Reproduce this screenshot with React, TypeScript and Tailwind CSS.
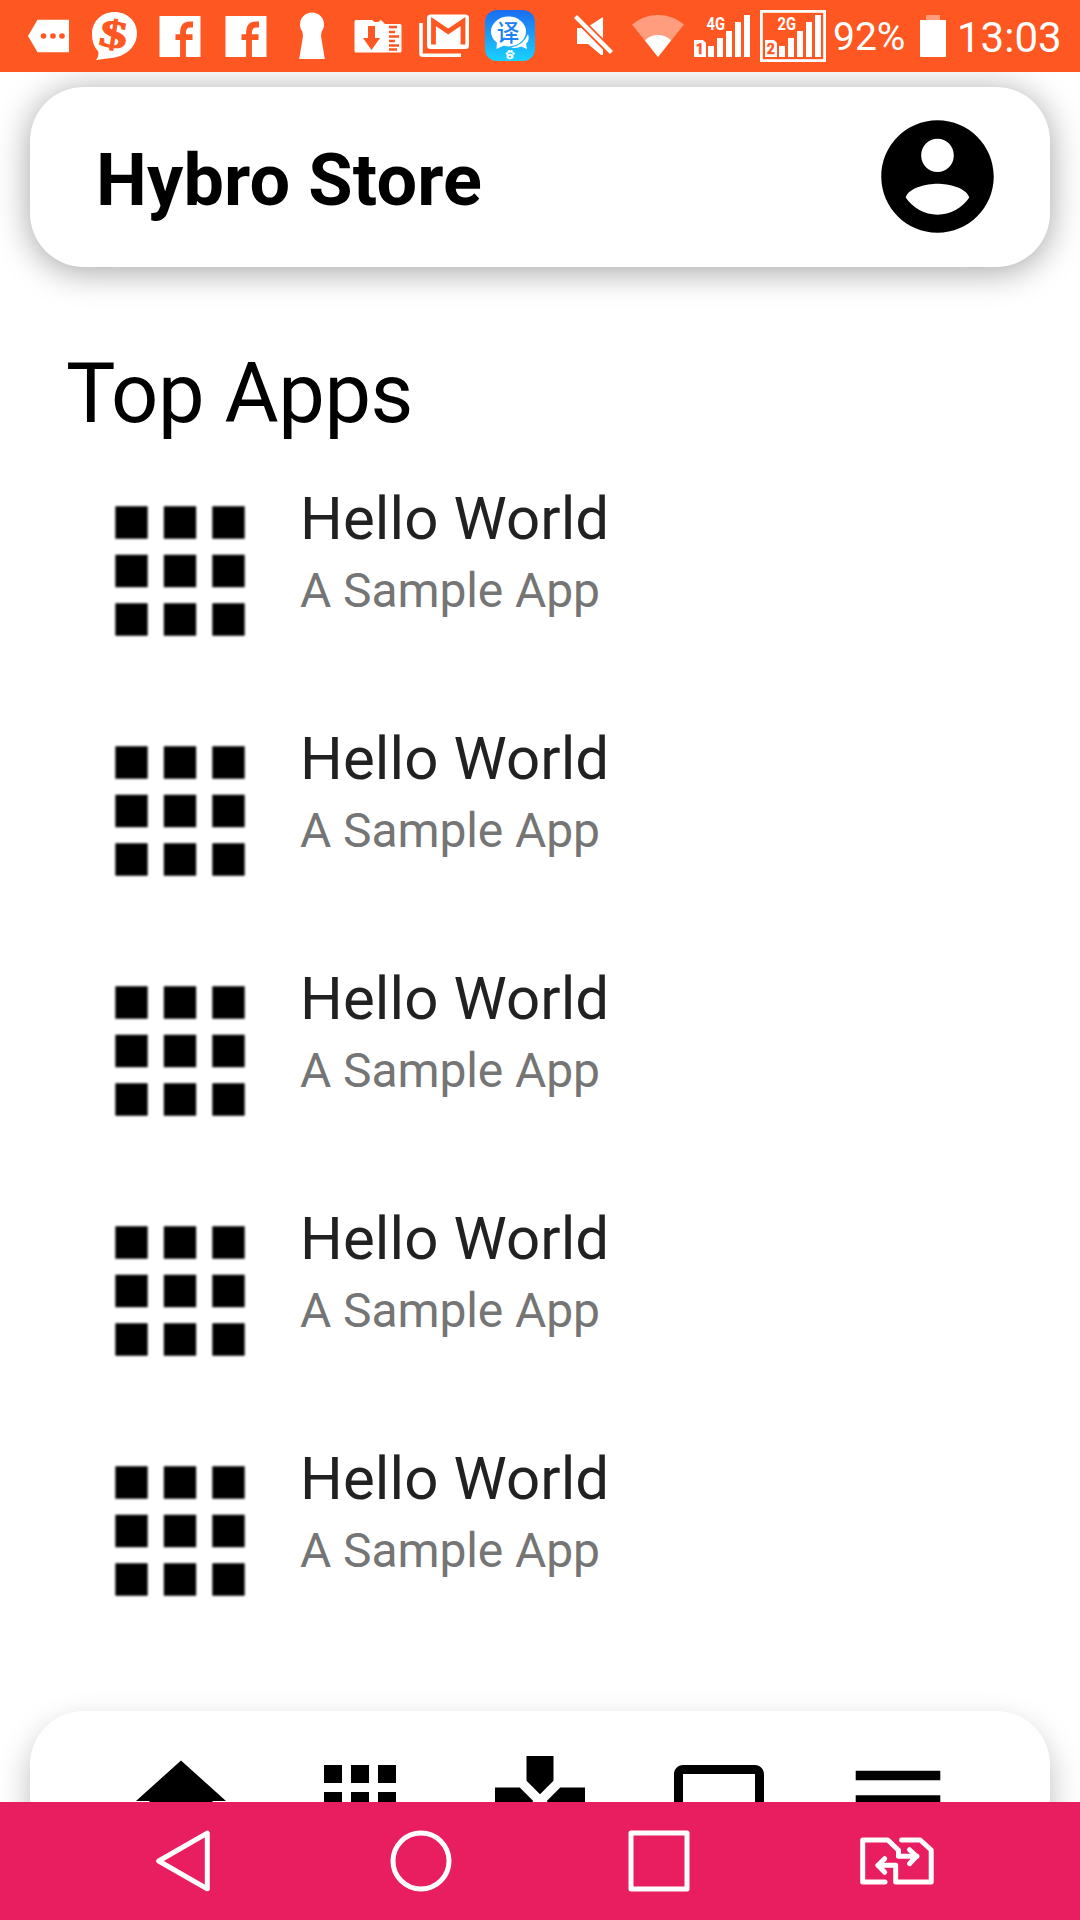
/**
 * Hybro Store home screen
 * Status bar, header card, top apps list and bottom tabs
 */

import type { ReactNode } from 'react';

interface AppEntry {
  id: number;
  name: string;
  description: string;
}

const topApps: AppEntry[] = [
  { id: 1, name: 'Hello World', description: 'A Sample App' },
  { id: 2, name: 'Hello World', description: 'A Sample App' },
  { id: 3, name: 'Hello World', description: 'A Sample App' },
  { id: 4, name: 'Hello World', description: 'A Sample App' },
  { id: 5, name: 'Hello World', description: 'A Sample App' },
];

// Each status icon is drawn in bar coordinates, x is where its slot starts
function StatusIcon({ x, width, children }: { x: number; width: number; children: ReactNode }) {
  return (
    <svg
      width={width}
      height={72}
      viewBox={`${x} 0 ${width} 72`}
      fill="#fff"
      className="shrink-0"
    >
      {children}
    </svg>
  );
}

function FacebookIcon() {
  return (
    <StatusIcon x={156} width={66}>
      <rect x="159.5" y="16" width="41" height="41" />
      <path d="M183 57V33Q183 24.500 190 24.500H193M175.500 37.200H192.500" fill="none" stroke="#ff5722" strokeWidth="5.800" />
    </StatusIcon>
  );
}

function SignalBars({ sim, network }: { sim: string; network: string }) {
  return (
    <>
      <path d="M694 40H703L706 43V57H694Z" />
      <text x="695.800" y="54" fontSize="14" fontWeight="700" fill="#ff5722" stroke="#ff5722" strokeWidth="0.5">
        {sim}
      </text>
      <path d="M708 46h6v11h-6zM717 38h6v19h-6zM726 31h6v26h-6zM735 22h6v35h-6zM744 15h6v42h-6z" />
      <text x="706.500" y="30" fontSize="17.500" fontWeight="700" textLength="18.500" lengthAdjust="spacingAndGlyphs">
        {network}
      </text>
    </>
  );
}

function StatusBar() {
  return (
    <div className="flex h-[72px] shrink-0 items-center bg-[#ff5722] pl-6 text-white">
      <StatusIcon x={24} width={60}>
        <path d="M28 36L37.500 19.700H69V52.300H37.500Z" />
        <g fill="#ff5722">
          <circle cx="43.500" cy="36" r="2.800" />
          <circle cx="53" cy="36" r="2.800" />
          <circle cx="62" cy="36" r="2.800" />
        </g>
      </StatusIcon>
      <StatusIcon x={84} width={72}>
        <path d="M114.500 12C127 12 137 21 137 33C137 47 125 57 111 58L96 60C98.500 57 99 54 98 51C94 47 92 41 92 34C92 21 102 12 114.500 12Z" />
        <text
          x="113.500"
          y="47.500"
          fontSize="39"
          fontWeight="700"
          fill="#ff5722"
          stroke="#ff5722"
          strokeWidth="1"
          textAnchor="middle"
          textLength="28"
          lengthAdjust="spacingAndGlyphs"
          transform="rotate(9 114 35)"
          className="font-['Liberation_Serif',serif]"
        >
          $
        </text>
      </StatusIcon>
      <FacebookIcon />
      <FacebookIcon />
      <StatusIcon x={288} width={52}>
        <circle cx="312" cy="24.500" r="12" />
        <path d="M302.500 32H321.500L321 36L324.800 59H299.200L303 36Z" />
      </StatusIcon>
      <StatusIcon x={340} width={70}>
        <path d="M356 20H372L374.500 22H378L381 20L385 24H400Q401.500 24 401.500 25.500V51Q401.500 52.500 400 52.500H356Q354.500 52.500 354.500 51V21.500Q354.500 20 356 20Z" />
        <path d="M368 26h7v12h5l-8.500 12l-8.500-12h5z" fill="#ff5722" />
        <path d="M389 27h8M389 32h6M389 36.500h10M389 41h6M389 45.500h10M389 49.500h8" stroke="#ff5722" strokeWidth="2.300" />
      </StatusIcon>
      <StatusIcon x={410} width={68}>
        <path d="M421 23V53.500Q421 55.300 423 55.300H461" fill="none" stroke="#fff" strokeWidth="3.600" />
        <rect x="427" y="14.500" width="42" height="34.500" rx="3.500" />
        <path d="M433.500 44.500V21.500L448.200 31.500L463 21.500V44.500" fill="none" stroke="#ff5722" strokeWidth="4.800" />
      </StatusIcon>
      <StatusIcon x={478} width={72}>
        <defs>
          <linearGradient id="translateBg" x1="0" y1="0" x2="0" y2="1">
            <stop offset="0" stopColor="#1b6cf0" />
            <stop offset="1" stopColor="#19d3ff" />
          </linearGradient>
        </defs>
        <rect x="485" y="10" width="50" height="51" rx="12" fill="url(#translateBg)" />
        <ellipse cx="508.500" cy="31.500" rx="17.500" ry="15" />
        <path d="M497 41L496.500 49L505 45Z" />
        <path d="M528 34Q530 40 526 44L527 49L521 46.500Q515 49 511 47.500Q524 45 528 34Z" />
        <text
          x="508"
          y="40.500"
          fontSize="22.500"
          fontWeight="500"
          fill="#1e82f5"
          textAnchor="middle"
          className="font-['Noto_Sans_CJK_SC',sans-serif]"
        >
          译
        </text>
        <ellipse cx="510" cy="56.500" rx="3.600" ry="2.800" />
        <circle cx="507" cy="53.500" r="1.300" />
        <circle cx="509" cy="51.500" r="1.400" />
        <circle cx="511.500" cy="51.500" r="1.400" />
        <circle cx="513.500" cy="53.500" r="1.300" />
        <circle cx="510" cy="56.800" r="1" fill="#19c3ff" />
      </StatusIcon>
      <StatusIcon x={550} width={72}>
        <path d="M577 28H582L603 49.500V55H601L588 44H577Z" />
        <path d="M589 26L603 17V41Z" />
        <path d="M575.500 16.500L611.500 52.500" stroke="#ff5722" strokeWidth="8" />
        <path d="M575.500 16.500L611.500 52.500" stroke="#fff" strokeWidth="4.200" />
      </StatusIcon>
      <StatusIcon x={622} width={68}>
        <path d="M658 57L632 24.500Q643 15 658 15T684 24.500Z" opacity="0.42" />
        <path d="M658 57L645 40.500Q650 35 658 35T671 40.500Z" />
      </StatusIcon>
      <StatusIcon x={690} width={66}>
        <SignalBars sim="1" network="4G" />
      </StatusIcon>
      <StatusIcon x={685} width={76}>
        <rect x="690.400" y="11.400" width="63.200" height="49.200" fill="none" stroke="#fff" strokeWidth="2.800" />
        <SignalBars sim="2" network="2G" />
      </StatusIcon>
      <span className="w-[82px] pl-[1px] pt-[3px] text-[39px] leading-none">92%</span>
      <StatusIcon x={914} width={42}>
        <rect x="926" y="15" width="14" height="5" opacity="0.42" />
        <rect x="920" y="20" width="26" height="37" />
      </StatusIcon>
      <span className="pl-[1px] pt-[3px] text-[42px] leading-none">13:03</span>
    </div>
  );
}

const iconPaths = {
  account:
    'M12 2C6.480 2 2 6.480 2 12s4.480 10 10 10 10-4.480 10-10S17.520 2 12 2zm0 3.300c1.600 0 2.900 1.300 2.900 2.950S13.600 11.200 12 11.200 9.100 9.900 9.100 8.250 10.400 5.300 12 5.300zm0 13.500c-2.300 0-4.400-1.200-5.650-3.050C6.900 14 10 13.300 12 13.300s5.100.7 5.650 2.450C16.400 17.600 14.300 18.800 12 18.800z',
  apps: 'M4 8h4V4H4v4zm6 12h4v-4h-4v4zm-6 0h4v-4H4v4zm0-6h4v-4H4v4zm6 0h4v-4h-4v4zm6-10v4h4V4h-4zm-6 4h4V4h-4v4zm6 6h4v-4h-4v4zm0 6h4v-4h-4v4z',
  home: 'M10 20v-6h4v6h5v-8h3L12 3 2 12h3v8z',
  games:
    'M15 7.500V2H9v5.500l3 3 3-3zM7.500 9H2v6h5.500l3-3-3-3zM9 16.500V22h6v-5.500l-3-3-3 3zM16.500 9l-3 3 3 3H22V9h-5.500z',
  laptop:
    'M20 18c1.100 0 2-.9 2-2V6c0-1.100-.9-2-2-2H4c-1.100 0-2 .9-2 2v10c0 1.100.9 2 2 2H0v2h24v-2h-4zM4 6h16v10H4V6z',
  menu: 'M2.600 5.300h18.800v2.100H2.600zM2.600 10.700h18.800v2.100H2.600zM2.600 16.100h18.800v2.100H2.600z',
};

function Icon({ name, className }: { name: keyof typeof iconPaths; className: string }) {
  return (
    <svg viewBox="0 0 24 24" fill="#000" className={`shrink-0 ${className}`}>
      <path d={iconPaths[name]} />
    </svg>
  );
}

function Header() {
  return (
    <header className="mx-[30px] mt-[15px] flex h-[180px] shrink-0 items-center justify-between rounded-[54px] bg-white pl-[66px] pr-[45px] shadow-[0_4px_34px_rgba(0,0,0,0.37)]">
      <h1 className="pt-[7px] text-[72px] font-bold leading-none tracking-[0.16px] text-black">Hybro Store</h1>
      <Icon name="account" className="mb-[2px] size-[135px] blur-[0.7px]" />
    </header>
  );
}

function AppRow({ app }: { app: AppEntry }) {
  return (
    <li className="flex h-[240px] pl-[83px]">
      <Icon name="apps" className="mt-[22px] size-[194px] blur-[0.8px]" />
      <div className="pl-[23px] pt-[32px]">
        <p className="text-[60px] leading-[70px] tracking-[0.1px] text-[#212121]">{app.name}</p>
        <p className="mt-[9px] text-[48px] leading-[56px] tracking-[-0.1px] text-[#757575]">{app.description}</p>
      </div>
    </li>
  );
}

const tabs: (keyof typeof iconPaths)[] = ['home', 'apps', 'games', 'laptop', 'menu'];

function BottomTabs() {
  return (
    <div className="mx-[30px] mt-[59px] flex h-[180px] shrink-0 rounded-[54px] bg-white pl-[61px] pr-[62px] pt-9 shadow-[0_14px_32px_rgba(0,0,0,0.26)]">
      {tabs.map((tab) => (
        <div key={tab} className="flex flex-1 justify-center">
          <Icon name={tab} className="size-[108px] blur-[0.5px]" />
        </div>
      ))}
    </div>
  );
}

function NavButton({ children }: { children: ReactNode }) {
  return (
    <button className="flex flex-1 items-center justify-center">
      <svg
        width={76}
        height={64}
        viewBox="-38 -32 76 64"
        fill="none"
        stroke="#fff"
        strokeWidth="5"
        strokeLinecap="round"
        strokeLinejoin="round"
      >
        {children}
      </svg>
    </button>
  );
}

function SystemNav() {
  return (
    <nav className="flex h-[118px] shrink-0 bg-[#e81e61] px-[64px]">
      <NavButton>
        <path d="M24.300-27.800V27.800L-24.300 0Z" />
      </NavButton>
      <NavButton>
        <circle r="28" />
      </NavButton>
      <NavButton>
        <rect x="-28" y="-28" width="56" height="56" />
      </NavButton>
      <NavButton>
        <g transform="translate(-37 -24)">
          <path d="M25 45H2.700V3H27.800L38.500 13.300V19.300H57" />
          <path d="M49.500 12.700L56.500 19.300L49.500 26.700" />
          <path d="M41.600 3H60.200L71.200 13V45H35.700V28.300H18" />
          <path d="M24.700 21.700L18 28.300L24.700 35.300" />
        </g>
      </NavButton>
    </nav>
  );
}

export default function App() {
  return (
    <div className="flex h-[1920px] w-[1080px] flex-col overflow-hidden bg-white font-['Roboto',sans-serif]">
      <StatusBar />
      <main className="flex min-h-0 flex-1 flex-col overflow-hidden">
        <Header />
        <h2 className="mt-[78px] pl-[66px] text-[83px] leading-[98px] tracking-[-0.4px] text-black">Top Apps</h2>
        <ul className="mt-[9px]">
          {topApps.map((app) => (
            <AppRow key={app.id} app={app} />
          ))}
        </ul>
        <BottomTabs />
      </main>
      <SystemNav />
    </div>
  );
}
